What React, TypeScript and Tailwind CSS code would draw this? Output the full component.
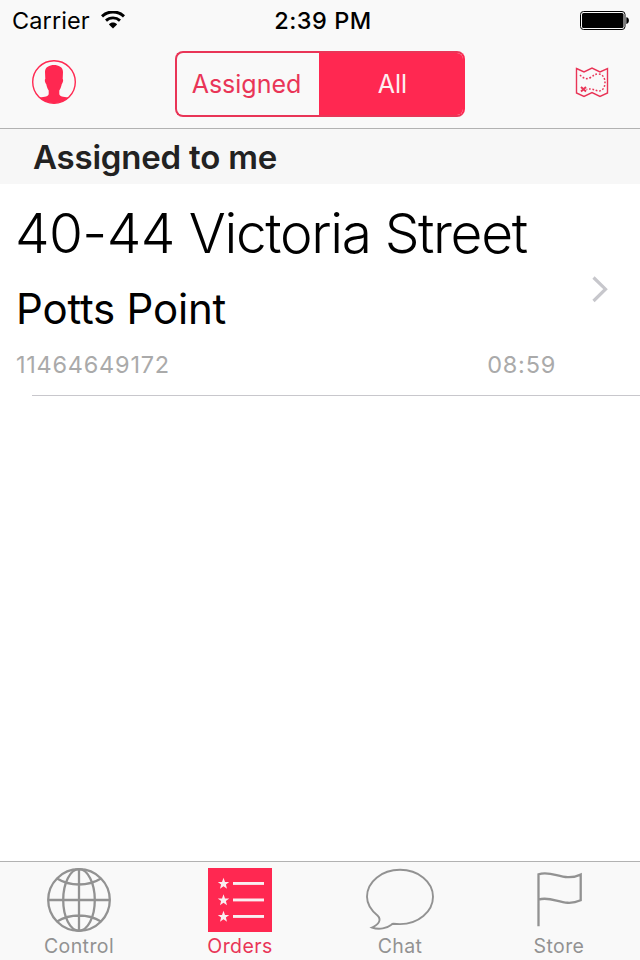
import React, { useState } from 'react'
import clsx from 'clsx'

type IconProps = { className?: string }

const WifiIcon = ({ className }: IconProps) => (
  <svg viewBox="0 0 24 18" className={className} fill="none" stroke="currentColor">
    <path d="M1 5.3C7.2-.5 16.8-.5 23 5.3" strokeWidth="3" />
    <path d="M5 9.6c4-3.7 10-3.7 14 0" strokeWidth="2.9" />
    <path d="M7.9 13.4c2.3-2.4 5.9-2.4 8.2 0L12 17.6z" fill="currentColor" stroke="none" />
  </svg>
)

const BatteryIcon = ({ className }: IconProps) => (
  <svg viewBox="0 0 50 20" className={className}>
    <rect x="0.5" y="1.5" width="44.5" height="18" rx="3" fill="none" stroke="#000" />
    <rect x="2" y="3" width="41.5" height="15" rx="1.5" fill="#000" />
    <path d="M46.3 7.2c1.8.2 2.6 1.5 2.6 3.4s-.8 3.2-2.6 3.4z" fill="#000" />
  </svg>
)

const ProfileIcon = ({ className }: IconProps) => (
  <svg viewBox="0 0 44 44" className={className}>
    <circle cx="22" cy="22" r="21.3" fill="none" stroke="currentColor" strokeWidth="1.4" />
    <path
      d="M22 5C26.5 5 31 7 31 12L30.7 19C31.6 19.4 31 22.8 29.8 24C29.2 27 28.4 29 27.300 30.500V34C27.500 36.500 31 36.800 36.500 37.500C32.800 41.200 27.500 43.200 22 43.200C16.500 43.200 11.200 41.200 7.500 37.500C13 36.800 16.500 36.500 16.700 34V30.500C15.600 29 14.800 27 14.200 24C13 22.800 12.400 19.400 13.300 19L13 12C13 7 17.500 5 22 5Z"
      fill="currentColor"
    />
  </svg>
)

const MapIcon = ({ className }: IconProps) => (
  <svg viewBox="0 0 34 32" className={className} fill="none" stroke="currentColor" strokeWidth="1.400">
    <path d="M1.500 2.500L9 6l8-4 8 4 7.500-3.500V27L25 30.500l-8-4-8 4L1.500 27z" />
    <path
      d="M5 9c3 3 6.500 5 10.500 2.500S20 8 23.500 8c4.500 0 6.500 4.500 6.500 8.500s-2 8.500-6 8.500-6-3.200-12.500-1.600"
      strokeWidth="1.500"
      strokeDasharray="1.800 1.700"
    />
    <path d="M6 21l5 4.500M11 21l-5 4.500" strokeWidth="1.900" />
  </svg>
)

const GlobeIcon = ({ className }: IconProps) => (
  <svg viewBox="0 0 64 64" className={className} fill="none" stroke="currentColor" strokeWidth="2.3">
    <circle cx="32" cy="32" r="30.8" />
    <ellipse cx="32" cy="32" rx="15.800" ry="30.8" />
    <path d="M32 1v62M1 32h62M10 10.500c13 8 31 8 44 0M10 53.500c13-8 31-8 44 0" />
  </svg>
)

const starPoints = '0,-6 1.5,-1.9 5.7,-1.85 2.4,0.8 3.5,4.85 0,2.5 -3.5,4.85 -2.4,0.8 -5.7,-1.85 -1.5,-1.9'

const OrdersIcon = ({ className }: IconProps) => (
  <svg viewBox="0 0 64 64" className={className}>
    <rect width="64" height="64" fill="#ff2851" />
    {[15.5, 32, 48.5].map((y) => (
      <g key={y} fill="#f9eef0">
        <polygon points={starPoints} transform={`translate(15.5 ${y + 0.3})`} />
        <rect x="25" y={y - 1.5} width="31" height="2.9" />
      </g>
    ))}
  </svg>
)

const ChatIcon = ({ className }: IconProps) => (
  <svg viewBox="0 0 68 64" className={className} fill="none" stroke="currentColor" strokeWidth="1.9">
    <path d="M27.5 55.700c2.200.3 4.300.4 6.500.4 18.300 0 33-12.500 33-27.400S52.300 1.800 34 1.800 1 13.800 1 28.700c0 7.300 4.500 13.800 10.500 18.800 4.300 4.200 1.500 9-5.500 12 7.500 2.700 15 .5 19-2.600.9-.8 1.500-1.200 2.500-1.200z" />
  </svg>
)

const FlagIcon = ({ className }: IconProps) => (
  <svg viewBox="0 0 48 64" className={className} fill="none" stroke="currentColor" strokeWidth="2.3">
    <path d="M3.500 58.300V6.300C18 1.500 28 14.500 45.700 6.600V32.300C28 40 18 27 3.500 31.600" />
  </svg>
)

const tabs = [
  { name: 'Control', icon: <GlobeIcon className="h-16 w-16" /> },
  { name: 'Orders', icon: <OrdersIcon className="h-16 w-16" /> },
  { name: 'Chat', icon: <ChatIcon className="h-16 w-[68px]" /> },
  { name: 'Store', icon: <FlagIcon className="h-16 w-12" /> },
]

const orders = [
  {
    id: '11464649172',
    number: '40-44',
    street: 'Victoria Street',
    suburb: 'Potts Point',
    time: '08:59',
  },
]

const StatusBar = () => (
  <div className="grid h-10 grid-cols-3 items-center text-black">
    <div className="flex items-center gap-[11px] pl-3">
      <span className="pt-0.5 text-[23.5px] tracking-[0.1px]">Carrier</span>
      <WifiIcon className="h-[18px] w-6" />
    </div>
    <span className="pt-0.5 pl-1.5 text-center text-[23.5px] font-medium tracking-[0.5px]">
      2:39 PM
    </span>
    <BatteryIcon className="mr-2.5 h-5 w-[50px] justify-self-end" />
  </div>
)

const App = () => {
  const [filter, setFilter] = useState('All')
  const [activeTab, setActiveTab] = useState('Orders')

  return (
    <div className="flex h-[960px] w-[640px] flex-col bg-white font-['Inter',sans-serif]">
      <header className="h-[129px] border-b border-[#b2b2b2] bg-[#f9f9f9]">
        <StatusBar />
        <div className="grid h-[88px] grid-cols-[1fr_290px_1fr] items-center pr-[31px] pl-8">
          <button className="mb-1 justify-self-start text-[#ff2851]">
            <ProfileIcon className="h-11 w-11" />
          </button>
          <div
            className={clsx(
              'flex h-[66px] w-[290px] -translate-x-px rounded-lg border-2 border-[#e93557]',
              filter === 'All' ? 'border-r-[#ff2851]' : 'border-l-[#ff2851]'
            )}
          >
            {['Assigned', 'All'].map((item) => (
              <button
                key={item}
                onClick={() => setFilter(item)}
                className={clsx(
                  'h-full pt-0.5 text-[25px]',
                  item === 'Assigned'
                    ? 'w-[142px] rounded-l-md pr-0.5'
                    : 'w-[144px] rounded-r-md pl-1',
                  filter === item ? 'bg-[#ff2851] text-[#fdeef1]' : 'text-[#e93557]'
                )}
              >
                {item}
              </button>
            ))}
          </div>
          <button className="mb-1 justify-self-end text-[#e93557]">
            <MapIcon className="h-8 w-[34px]" />
          </button>
        </div>
      </header>

      <main className="flex-1">
        <h2 className="h-[55px] bg-[#f7f7f7] pl-[33px] text-[33px] leading-[57px] font-semibold tracking-[-0.2px] text-[#222]">
          Assigned to me
        </h2>
        {orders.map((order) => (
          <div key={order.id} className="pl-4">
            <div className="flex h-[211px] items-center">
              <div className="flex h-full w-[540px] flex-col pt-[17px] text-black">
                <div className="-ml-px text-[55px] leading-[64px] font-light tracking-[-1.35px]">
                  <span className="tracking-[-0.6px]">{order.number}</span> {order.street}
                </div>
                <div className="mt-5 text-[42px] leading-[48px] tracking-[-0.2px]">
                  {order.suburb}
                </div>
                <div className="mt-[18px] flex justify-between text-[23.5px] leading-7 tracking-[0.75px] text-[#aaa]">
                  <span>{order.id}</span>
                  <span>{order.time}</span>
                </div>
              </div>
              <svg viewBox="0 0 18 28" className="mb-0.5 ml-[35px] h-7 w-[18px]" fill="none">
                <path d="M2.5 2.5L14.5 14.2L2.5 26" stroke="#c7c7cc" strokeWidth="3.2" />
              </svg>
            </div>
            <div className="ml-4 h-px bg-[#c8c7cc]" />
          </div>
        ))}
      </main>

      <nav className="grid h-[99px] grid-cols-[158px_164px_156px_162px] border-t border-[#b2b2b2] bg-[#f9f9f9]">
        {tabs.map((tab) => (
          <button
            key={tab.name}
            onClick={() => setActiveTab(tab.name)}
            className={clsx(
              'flex flex-col items-center pt-1.5',
              activeTab === tab.name ? 'text-[#e93557]' : 'text-[#929292]'
            )}
          >
            {tab.icon}
            <span className="mt-0.5 text-[19.5px] leading-6 tracking-[0.4px]">{tab.name}</span>
          </button>
        ))}
      </nav>
    </div>
  )
}

export default App
